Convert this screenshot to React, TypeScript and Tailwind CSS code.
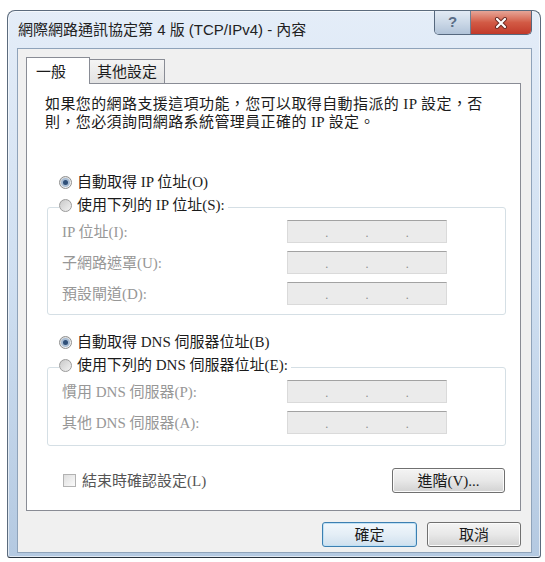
import type { ReactNode } from 'react';

const body = "font-['Liberation_Serif','Noto_Sans_CJK_TC',serif]";

function Radio({ checked }: { checked?: boolean }) {
  return (
    <span
      className={
        checked
          ? 'flex size-[13px] shrink-0 items-center justify-center rounded-full border border-[#8e8f8f] bg-gradient-to-br from-[#d6d6d6] to-[#fbfbfb]'
          : 'flex size-[13px] shrink-0 items-center justify-center rounded-full border border-[#9a9a9a] bg-gradient-to-br from-[#c9c9c9] to-[#f2f2f2]'
      }
    >
      {checked && (
        <span className="size-[5px] rounded-full bg-[#2f4f78] shadow-[0_0_0_2px_#a9bdd4]" />
      )}
    </span>
  );
}

function Checkbox() {
  return (
    <span className="size-[13px] shrink-0 border border-[#b2b2b2] bg-gradient-to-br from-[#dedede] to-[#fbfbfb]" />
  );
}

function RadioRow({ checked, children }: { checked?: boolean; children: ReactNode }) {
  return (
    <div className="flex h-[20px] items-center gap-[5px] leading-[20px] whitespace-nowrap">
      <Radio checked={checked} />
      <span>{children}</span>
    </div>
  );
}

function IpBox() {
  return (
    <div className="flex h-[23px] w-[160px] items-end border border-[#dadada] border-t-[#a2a2a2] bg-[#ebebeb] pb-[3px] text-[12px] leading-[12px] text-[#8c8c8c]">
      <span className="flex-1" />
      <span>.</span>
      <span className="flex-1" />
      <span>.</span>
      <span className="flex-1" />
      <span>.</span>
      <span className="flex-1" />
    </div>
  );
}

function Field({ label }: { label: string }) {
  return (
    <div className="flex h-[23px] items-center">
      <span className="w-[225px] leading-[20px] whitespace-nowrap text-[#979797]">{label}</span>
      <IpBox />
    </div>
  );
}

function Button({ children, primary, width }: { children: ReactNode; primary?: boolean; width: string }) {
  return (
    <button
      className={
        primary
          ? `flex h-[25px] ${width} items-center justify-center rounded-[3px] border border-[#3c7fb1] bg-gradient-to-b from-[#f1f7fc] via-[#e4eef6] to-[#cfe0ee] text-[15px] leading-[20px] text-[#1a1a1a] shadow-[inset_0_0_0_1px_#bfe0f4]`
          : `flex h-[25px] ${width} items-center justify-center rounded-[3px] border border-[#707070] bg-gradient-to-b from-[#f4f4f4] via-[#e8e8e8] to-[#d2d2d2] text-[15px] leading-[20px] text-[#1a1a1a] shadow-[inset_0_0_0_1px_#fbfbfb]`
      }
    >
      {children}
    </button>
  );
}

export default function App() {
  return (
    <div className={`h-[562px] w-[545px] overflow-hidden bg-white pt-[10px] pl-[7px] ${body} text-[15px] text-[#1b1b1b]`}>
      <div className="flex h-[548px] w-[534px] flex-col rounded-t-[8px] rounded-b-[3px] border border-[#5b6b7d] border-b-[#28323d] bg-gradient-to-b from-[#e4edf8] via-[#cfdff1] to-[#b4c9e1] shadow-[inset_0_0_0_1px_rgba(255,255,255,0.6)]">
        {/* title bar */}
        <div className="flex h-[37px] items-start">
          <span className="pt-[9px] pl-[10px] font-['Liberation_Sans','Noto_Sans_CJK_TC',sans-serif] text-[15px] leading-[20px] whitespace-nowrap text-[#222]">
            網際網路通訊協定第 4 版 (TCP/IPv4) - 內容
          </span>
          <div className="mr-[8px] ml-auto flex h-[24px] overflow-hidden rounded-b-[5px] border border-t-0 border-[#56687e]">
            <div className="flex w-[36px] items-center justify-center border-r border-[#6d7f94] bg-gradient-to-b from-[#e2eaf4] via-[#cbd8e7] to-[#b1c3d8] font-['Liberation_Sans',sans-serif] text-[15px] font-bold text-[#5a6d86]">
              ?
            </div>
            <div className="flex w-[60px] items-center justify-center bg-gradient-to-b from-[#e6a597] via-[#d25a45] to-[#c1392a]">
              <svg width="14" height="12" viewBox="0 0 14 12">
                <path d="M3 2 L11 10 M11 2 L3 10" stroke="#6a2a22" strokeWidth="4" strokeLinecap="round" />
                <path d="M3 2 L11 10 M11 2 L3 10" stroke="#fff" strokeWidth="2.2" strokeLinecap="round" />
              </svg>
            </div>
          </div>
        </div>

        {/* client area */}
        <div className="mr-[8px] mb-[4px] ml-[9px] flex flex-1 flex-col border border-[#8fa3ba] bg-[#f0f0f0] pt-[8px] pr-[10px] pb-[5px] pl-[8px]">
          {/* tabs */}
          <div className="flex items-end">
            <div className="relative z-10 -mb-px flex h-[27px] w-[64px] items-center border border-b-0 border-[#898c95] bg-white pt-[2px] pl-[9px] leading-[20px]">
              一般
            </div>
            <div className="flex h-[24px] w-[75px] items-center justify-center border border-b-0 border-l-0 border-[#898c95] bg-gradient-to-b from-[#f4f4f4] to-[#e3e3e3] leading-[20px]">
              其他設定
            </div>
          </div>

          {/* panel */}
          <div className="flex flex-col border border-[#898c95] bg-white pt-[11px] pb-[17px]">
            <p className="pl-[18px] leading-[18px] tracking-[0.4px] whitespace-nowrap">
              如果您的網路支援這項功能，您可以取得自動指派的 IP 設定，否
              <br />
              則，您必須詢問網路系統管理員正確的 IP 設定。
            </p>

            <div className="mt-[41px] ml-[32px]">
              <RadioRow checked>自動取得 IP 位址(O)</RadioRow>
            </div>

            <fieldset className="mt-[3px] mr-[14px] ml-[20px] rounded-[3px] border border-[#d5dfe5] px-0 pt-px pb-[9px]">
              <legend className="ml-[11px] h-[24px] pr-[3px] pb-[4px]">
                <RadioRow>使用下列的 IP 位址(S):</RadioRow>
              </legend>
              <div className="flex flex-col gap-[8px] pl-[14px]">
                <Field label="IP 位址(I):" />
                <Field label="子網路遮罩(U):" />
                <Field label="預設閘道(D):" />
              </div>
            </fieldset>

            <div className="mt-[17px] ml-[32px]">
              <RadioRow checked>自動取得 DNS 伺服器位址(B)</RadioRow>
            </div>

            <fieldset className="mt-[3px] mr-[14px] ml-[20px] rounded-[3px] border border-[#d5dfe5] px-0 pt-px pb-[11px]">
              <legend className="ml-[11px] h-[24px] pr-[3px] pb-[4px]">
                <RadioRow>使用下列的 DNS 伺服器位址(E):</RadioRow>
              </legend>
              <div className="flex flex-col gap-[8px] pl-[14px]">
                <Field label="慣用 DNS 伺服器(P):" />
                <Field label="其他 DNS 伺服器(A):" />
              </div>
            </fieldset>

            <div className="mt-[22px] mr-[15px] ml-[36px] flex h-[25px] items-center justify-between">
              <label className="flex items-center gap-[6px] leading-[20px] text-[#555]">
                <Checkbox />
                <span>結束時確認設定(L)</span>
              </label>
              <Button width="w-[113px]">進階(V)...</Button>
            </div>
          </div>

          {/* dialog buttons */}
          <div className="mt-[11px] flex justify-end gap-[10px]">
            <Button primary width="w-[95px]">
              確定
            </Button>
            <Button width="w-[94px]">取消</Button>
          </div>
        </div>
      </div>
    </div>
  );
}
